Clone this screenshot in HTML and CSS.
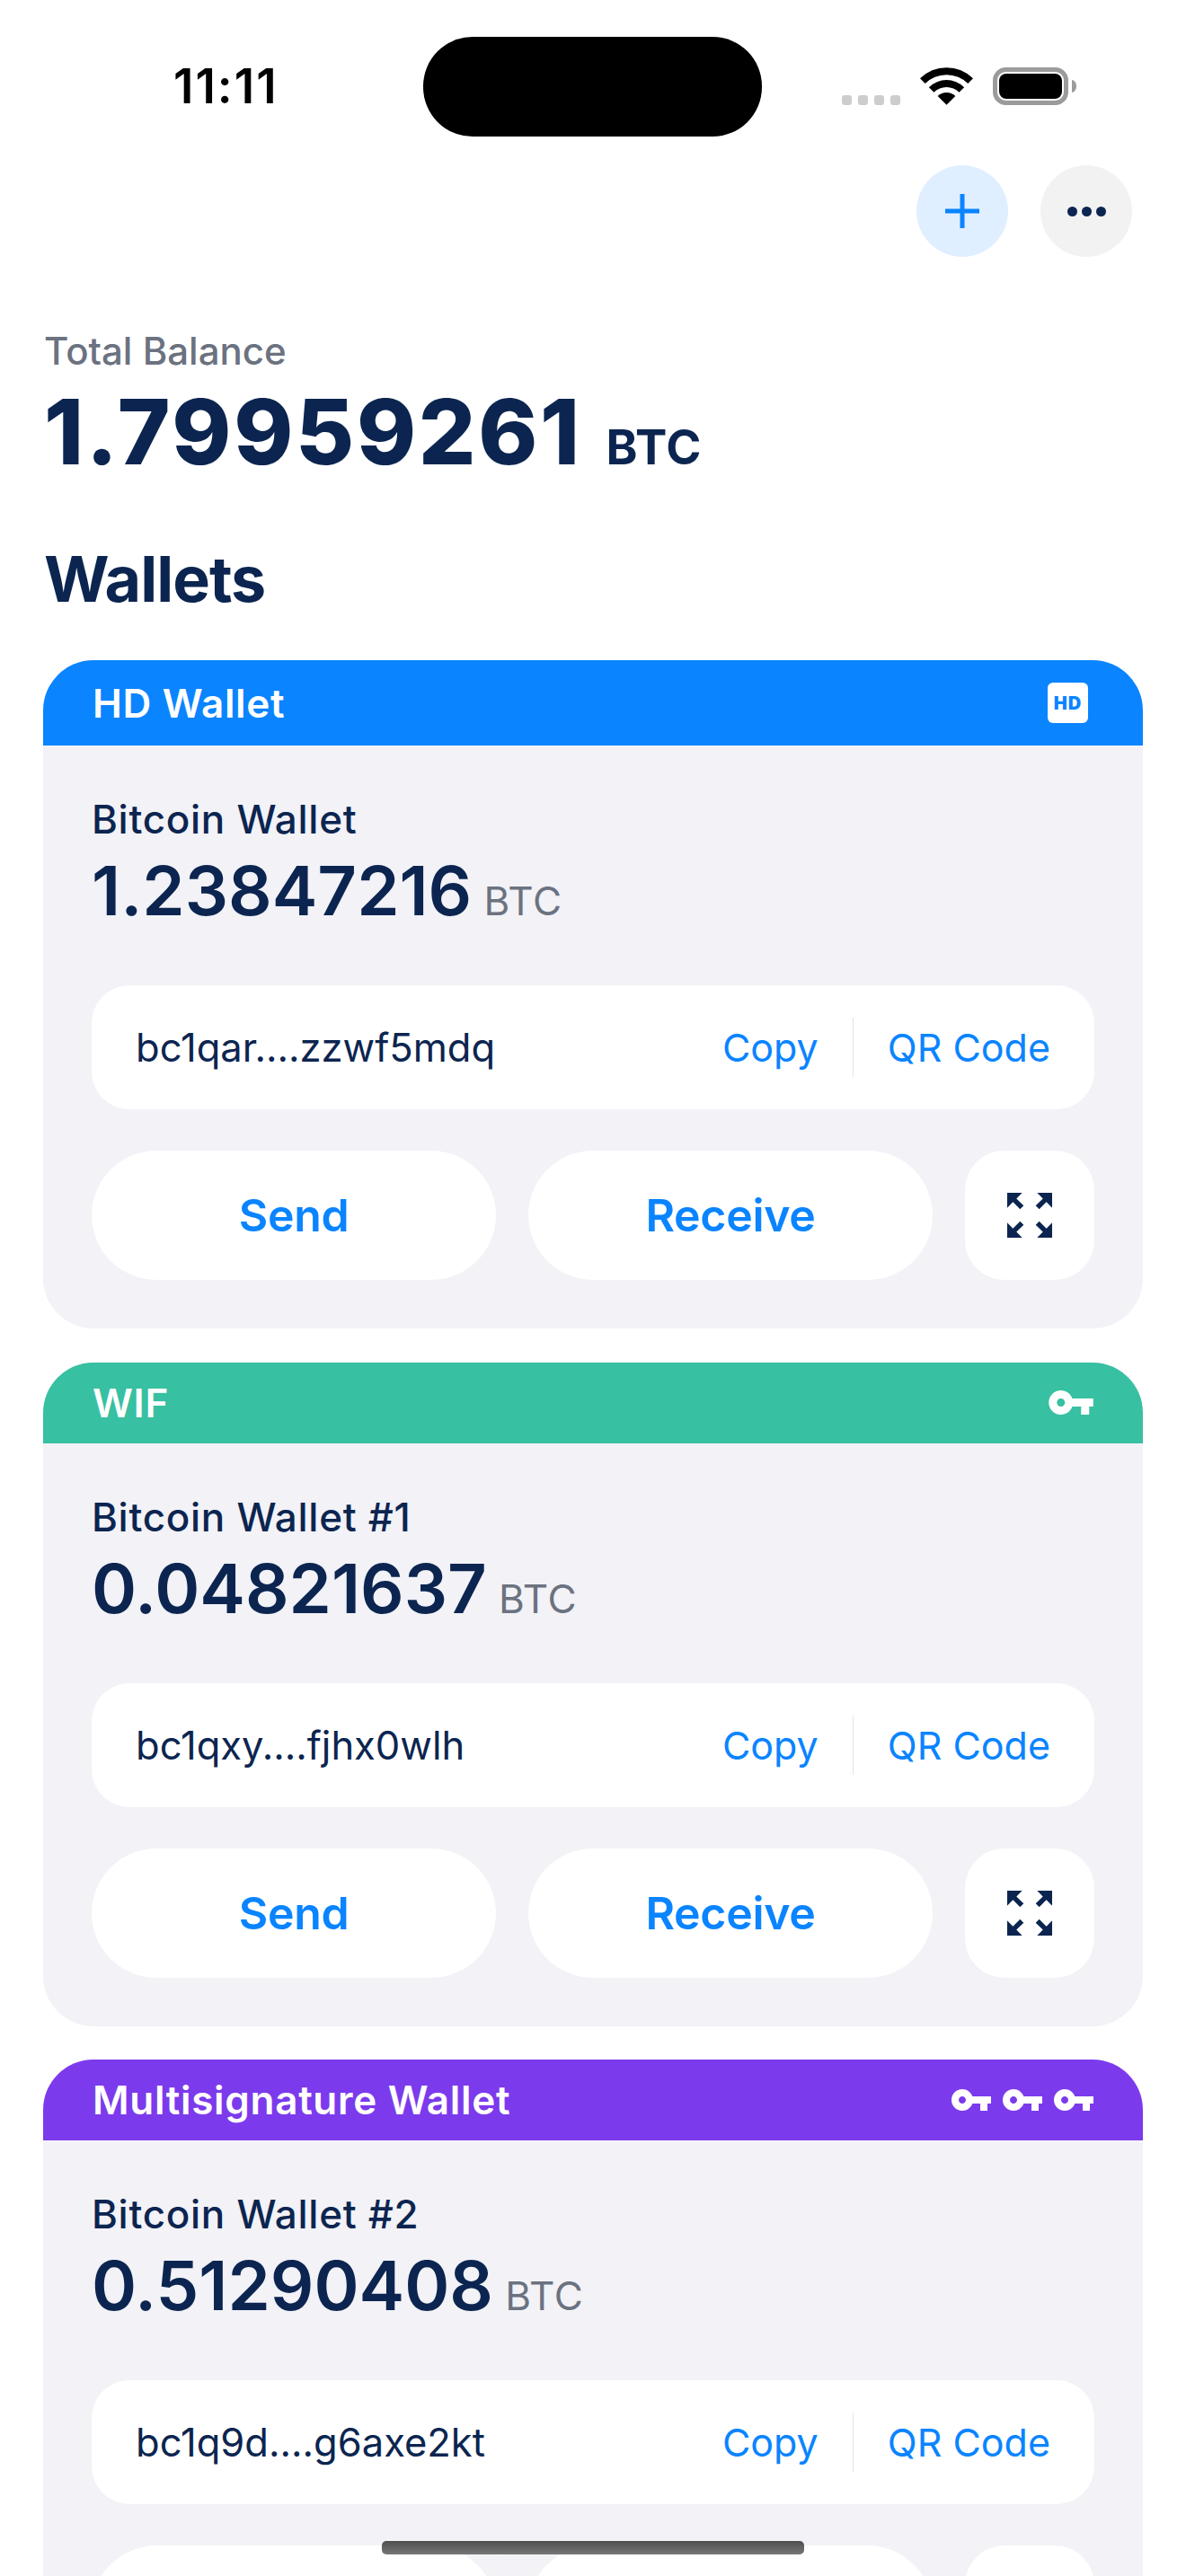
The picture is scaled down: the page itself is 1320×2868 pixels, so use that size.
FILE: index.html
```html
<!DOCTYPE html>
<html>
    <head>
        <meta charset="UTF-8">
        <title>Wallets</title>
        <link rel="stylesheet" href="styles.css">
    </head>
    <body>
        <svg class="defs" width="0" height="0">
            <symbol id="key" viewBox="1 6 22 12">
                <path d="M12.65 10C11.83 7.67 9.61 6 7 6c-3.31 0-6 2.69-6 6s2.69 6 6 6c2.61 0 4.83-1.67 5.65-4H17v4h4v-4h2v-4H12.65zM7 14c-1.1 0-2-.9-2-2s.9-2 2-2 2 .9 2 2-.9 2-2 2z"/>
            </symbol>
            <symbol id="expand" viewBox="3 3 18 18">
                <path d="M15 3l2.3 2.3-2.89 2.87 1.42 1.42L18.7 6.7 21 9V3zM3 9l2.3-2.3 2.87 2.89 1.42-1.42L6.7 5.3 9 3H3zm6 12l-2.3-2.3 2.89-2.87-1.42-1.42L5.3 17.3 3 15v6zm12-6l-2.3 2.3-2.87-2.89-1.42 1.42 2.89 2.87L15 21h6z"/>
            </symbol>
        </svg>

        <div class="screen">
            <div class="status">
                <div class="time">11:11</div>
                <div class="island"></div>
                <div class="status-icons">
                    <div class="signal"><span></span><span></span><span></span><span></span></div>
                    <svg class="wifi" width="59" height="42" viewBox="0 0 59.4 42">
                        <path d="M0 12.3A42 42 0 0 1 59.4 12.3L53.7 18A34 34 0 0 0 5.7 18z"/>
                        <path d="M9.9 22.2A28 28 0 0 1 49.5 22.2L43.8 27.9A20 20 0 0 0 15.6 27.9z"/>
                        <path d="M19.8 32.1A14 14 0 0 1 39.6 32.1L29.7 42z"/>
                    </svg>
                    <svg class="battery" width="93" height="42" viewBox="0 0 93 42">
                        <rect x="2.5" y="2.5" width="79" height="37" rx="12" fill="none" stroke="#9b9b9b" stroke-width="5"/>
                        <rect x="7" y="7" width="70" height="28" rx="8"/>
                        <path d="M88 14c3 .6 5 3.4 5 7s-2 6.400-5 7z" fill="#9b9b9b"/>
                    </svg>
                </div>
            </div>

            <div class="actions">
                <div class="round-btn add">
                    <svg width="38" height="38" viewBox="0 0 38 38"><path d="M16.500 0h5v16.500H38v5H21.500V38h-5V21.500H0v-5h16.500z"/></svg>
                </div>
                <div class="round-btn more">
                    <i></i><i></i><i></i>
                </div>
            </div>

            <div class="summary">
                <p class="total-label">Total Balance</p>
                <p class="total">1.79959261 <span>BTC</span></p>
                <h1>Wallets</h1>
            </div>

            <div class="wallet">
                <div class="wallet-head head-hd">
                    <p>HD Wallet</p>
                    <span class="hd-badge">HD</span>
                </div>
                <div class="wallet-body">
                    <p class="wallet-name">Bitcoin Wallet</p>
                    <p class="wallet-amount">1.23847216 <span>BTC</span></p>
                    <div class="address">
                        <p>bc1qar....zzwf5mdq</p>
                        <a>Copy</a>
                        <b></b>
                        <a>QR Code</a>
                    </div>
                    <div class="buttons">
                        <div class="button">Send</div>
                        <div class="button">Receive</div>
                        <div class="button square"><svg width="50" height="50"><use href="#expand"/></svg></div>
                    </div>
                </div>
            </div>

            <div class="wallet">
                <div class="wallet-head head-wif">
                    <p>WIF</p>
                    <div class="keys"><svg width="50" height="27"><use href="#key"/></svg></div>
                </div>
                <div class="wallet-body">
                    <p class="wallet-name">Bitcoin Wallet #1</p>
                    <p class="wallet-amount">0.04821637 <span>BTC</span></p>
                    <div class="address">
                        <p>bc1qxy....fjhx0wlh</p>
                        <a>Copy</a>
                        <b></b>
                        <a>QR Code</a>
                    </div>
                    <div class="buttons">
                        <div class="button">Send</div>
                        <div class="button">Receive</div>
                        <div class="button square"><svg width="50" height="50"><use href="#expand"/></svg></div>
                    </div>
                </div>
            </div>

            <div class="wallet">
                <div class="wallet-head head-multi">
                    <p>Multisignature Wallet</p>
                    <div class="keys">
                        <svg width="44" height="24"><use href="#key"/></svg>
                        <svg width="44" height="24"><use href="#key"/></svg>
                        <svg width="44" height="24"><use href="#key"/></svg>
                    </div>
                </div>
                <div class="wallet-body">
                    <p class="wallet-name">Bitcoin Wallet #2</p>
                    <p class="wallet-amount">0.51290408 <span>BTC</span></p>
                    <div class="address">
                        <p>bc1q9d....g6axe2kt</p>
                        <a>Copy</a>
                        <b></b>
                        <a>QR Code</a>
                    </div>
                    <div class="buttons">
                        <div class="button">Send</div>
                        <div class="button">Receive</div>
                        <div class="button square"><svg width="50" height="50"><use href="#expand"/></svg></div>
                    </div>
                </div>
            </div>

            <div class="home-bar"></div>
        </div>
    </body>
</html>
```

FILE: styles.css
```css
html, body {
    margin: 0;
    padding: 0;
    background: #fff;
}
p, h1 {
    margin: 0;
    padding: 0;
}
.defs {
    position: absolute;
}
.screen {
    position: relative;
    height: 2868px;
    overflow: hidden;
    font-family: Inter, "Liberation Sans", sans-serif;
    color: #0c2550;
}

/* status bar */
.status {
    display: flex;
    height: 111px;
    padding-top: 41px;
}
.time {
    width: 278px;
    padding: 34px 0 0 193px;
    font-size: 53px;
    font-weight: 600;
    line-height: 42px;
    letter-spacing: 2px;
    color: #000;
}
.island {
    width: 377px;
    height: 111px;
    border-radius: 55px;
    background: #000;
}
.status-icons {
    display: flex;
    align-items: flex-end;
    gap: 22px;
    height: 42px;
    margin: 34px 0 0 89px;
}
.signal {
    display: flex;
    gap: 7px;
}
.signal span {
    width: 11px;
    height: 11px;
    border-radius: 3px;
    background: #cdcdcd;
}

/* top buttons */
.actions {
    display: flex;
    justify-content: flex-end;
    gap: 36px;
    padding: 32px 60px 0 0;
}
.round-btn {
    display: flex;
    align-items: center;
    justify-content: center;
    width: 102px;
    height: 102px;
    border-radius: 50%;
}
.add {
    background: #e0efff;
}
.add svg {
    fill: #0a84ff;
}
.more {
    gap: 5px;
    background: #f2f2f2;
}
.more i {
    width: 11px;
    height: 11px;
    border-radius: 50%;
    background: #0c2550;
}

/* balance */
.summary {
    padding: 80px 0 50px 49px;
}
.total-label {
    font-size: 42px;
    font-weight: 500;
    line-height: 50px;
    color: #6b7280;
}
.total {
    margin-top: 10px;
    font-size: 100px;
    font-weight: 800;
    line-height: 110px;
    letter-spacing: 2.7px;
}
.total span {
    margin-left: 2px;
    font-size: 53px;
    font-weight: 700;
    line-height: 1;
    letter-spacing: .5px;
}
h1 {
    margin-top: 69px;
    font-size: 70px;
    font-weight: 700;
    line-height: 80px;
    letter-spacing: -1px;
}

/* wallet cards */
.wallet {
    margin: 0 48px 37.500px;
    border-radius: 56px;
    overflow: hidden;
    background: #f2f2f7;
}
.wallet-head {
    display: flex;
    align-items: center;
    justify-content: space-between;
    height: 90px;
    padding: 0 55px;
    font-size: 44px;
    font-weight: 600;
    letter-spacing: .7px;
    color: #fff;
}
.head-hd {
    height: 95px;
    background: #0a84ff;
}
.head-wif {
    background: #37c0a1;
}
.head-multi {
    background: #7c3aed;
}
.hd-badge {
    display: flex;
    align-items: center;
    justify-content: center;
    width: 45px;
    height: 45px;
    margin-right: 6px;
    border-radius: 6px;
    background: #fff;
    font-size: 20px;
    font-weight: 900;
    letter-spacing: 1px;
    color: #0a84ff;
}
.keys {
    display: flex;
    gap: 13px;
    fill: #fff;
}
.keys svg {
    display: block;
}
.wallet-body {
    padding: 57px 54px 54px;
}
.wallet-name {
    font-size: 44px;
    font-weight: 500;
    line-height: 50px;
    letter-spacing: .7px;
}
.wallet-amount {
    margin: 9px 0 61px;
    font-size: 76px;
    font-weight: 600;
    line-height: 90px;
}
.wallet-amount span {
    margin-left: -6px;
    font-size: 44px;
    font-weight: 400;
    line-height: 1;
    letter-spacing: .6px;
    color: #6b7280;
}
.address {
    display: flex;
    align-items: center;
    height: 138px;
    padding: 0 49px;
    border-radius: 42px;
    background: #fff;
    font-size: 43px;
    line-height: 50px;
}
.address p {
    flex: 1;
    font-size: 43.500px;
}
.address a {
    color: #0a84ff;
}
.address b {
    width: 1px;
    height: 66px;
    margin: 0 38px;
    background: #e5e5ea;
}
.buttons {
    display: flex;
    gap: 36px;
    margin-top: 46px;
}
.button {
    display: flex;
    align-items: center;
    justify-content: center;
    flex: 1;
    height: 144px;
    border-radius: 72px;
    background: #fff;
    font-size: 50px;
    font-weight: 600;
    letter-spacing: -.3px;
    color: #0a84ff;
}
.square {
    flex: 0 0 144px;
    border-radius: 44px;
    fill: #0c2550;
}

.home-bar {
    position: absolute;
    left: 425px;
    bottom: 24px;
    width: 470px;
    height: 15px;
    border-radius: 5px;
    background: linear-gradient(#4e4e4e, #777);
}
```
